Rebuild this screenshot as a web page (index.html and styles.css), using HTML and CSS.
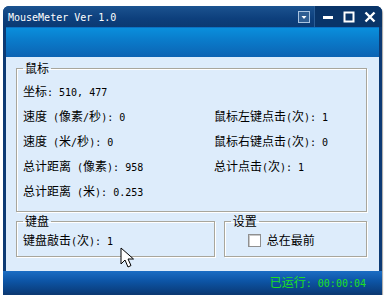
FILE: index.html
```html
<!DOCTYPE html>
<html lang="zh-CN">
<head>
    <meta charset="UTF-8">
    <title>MouseMeter Ver 1.0</title>
    <link rel="stylesheet" href="styles.css">
</head>
<body>
<div class="window">
    <div class="titlebar">
        <span class="title">MouseMeter Ver 1.0</span>
        <span class="menu-btn">
            <svg width="12" height="12" viewBox="0 0 12 12"><rect x="0.5" y="0.5" width="11" height="11" fill="#2f5e93" stroke="#a9c3df"/><path d="M3.5 5h5l-2.5 3z" fill="#ffffff"/></svg>
        </span>
        <span class="controls">
            <svg width="12" height="12" viewBox="0 0 12 12"><rect x="1" y="5" width="10" height="3" fill="#ffffff"/></svg>
            <svg width="12" height="12" viewBox="0 0 12 12"><rect x="1.5" y="1.5" width="9" height="9" fill="none" stroke="#ffffff" stroke-width="2"/></svg>
            <svg width="12" height="12" viewBox="0 0 12 12"><path d="M1.5 1.5l9 9M10.5 1.5l-9 9" stroke="#ffffff" stroke-width="2.4"/></svg>
        </span>
    </div>
    <div class="band"></div>
    <div class="content">
        <fieldset class="group">
            <legend>鼠标</legend>
            <div class="stats">
                <span>坐标<span class="a">: 510, 477</span></span>
                <span></span>
                <span>速度<span class="a"> (</span>像素<span class="a">/</span>秒<span class="a">): 0</span></span>
                <span>鼠标左键点击<span class="a">(</span>次<span class="a">): 1</span></span>
                <span>速度<span class="a"> (</span>米<span class="a">/</span>秒<span class="a">): 0</span></span>
                <span>鼠标右键点击<span class="a">(</span>次<span class="a">): 0</span></span>
                <span>总计距离<span class="a"> (</span>像素<span class="a">): 958</span></span>
                <span>总计点击<span class="a">(</span>次<span class="a">): 1</span></span>
                <span>总计距离<span class="a"> (</span>米<span class="a">): 0.253</span></span>
                <span></span>
            </div>
        </fieldset>
        <div class="bottom-row">
            <fieldset class="group keyboard">
                <legend>键盘</legend>
                <div class="line">键盘敲击<span class="a">(</span>次<span class="a">): 1</span></div>
            </fieldset>
            <fieldset class="group settings">
                <legend>设置</legend>
                <label class="line check"><span class="box"></span>总在最前</label>
            </fieldset>
        </div>
    </div>
    <div class="statusbar">已运行<span class="a">: 00:00:04</span></div>
    <svg class="cursor" width="14" height="22" viewBox="0 0 14 22"><path d="M1 1v16l4-4 3 7 3-1.5-3-6.5h5.5z" fill="#ffffff" stroke="#000000" stroke-width="1"/></svg>
</div>
</body>
</html>
```

FILE: styles.css
```css
body {
    margin: 0;
    background: #ffffff;
    font-family: "Noto Sans CJK SC", "DejaVu Sans", sans-serif;
    font-size: 12px;
    color: #000000;
}
/* half-width text: 6px per char like the old bitmap font */
.a {
    font-family: "DejaVu Sans Mono", "Liberation Mono", monospace;
    font-size: 10px;
    white-space: pre;
}
.window {
    position: relative;
    margin: 6px 0 0 3px;
    width: 379px;
    height: 289px;
    padding: 0 3px 2px;
    box-sizing: border-box;
    background: #0c3a74;
    border-radius: 6px 6px 0 0;
    box-shadow: 1px 1px 1px rgba(0, 0, 0, 0.35);
    display: flex;
    flex-direction: column;
}
.titlebar {
    height: 21px;
    display: flex;
    align-items: center;
    background: linear-gradient(#1b5390, #0d3f7c 60%, #0b3a73);
    margin: 0 -3px;
    padding: 0 0 0 5px;
    border-radius: 6px 6px 0 0;
}
.title {
    font-family: "DejaVu Sans Mono", "Liberation Mono", monospace;
    font-size: 10px;
    color: #ffffff;
    flex: 1;
    padding-top: 1px;
}
.menu-btn {
    display: flex;
    padding-right: 4px;
    height: 21px;
    align-items: center;
    border-right: 1px solid #2a5d96;
}
.controls {
    display: flex;
    gap: 9px;
    height: 21px;
    align-items: center;
    padding: 0 6px 0 7px;
    background: #093468;
    border-radius: 0 6px 0 0;
}
.band {
    height: 30px;
    background: linear-gradient(#0a8fdc, #0a7ccb 40%, #0c63b3);
    border-top: 1px solid #0b72c4;
    box-sizing: border-box;
}
.content {
    height: 214px;
    background: #ddecfb;
    padding: 4px 12px 0 10px;
    box-sizing: border-box;
}
.group {
    margin: 0;
    border: 1px solid #a8a69c;
    box-shadow: inset 1px 1px 0 #ffffff, 1px 1px 0 #ffffff;
    padding: 3px 6px 8px 6px;
}
.group legend {
    padding: 0 2px;
    margin-left: 0;
    line-height: 14px;
}
.stats {
    display: grid;
    grid-template-columns: 191px 1fr;
    grid-auto-rows: 25px;
    align-items: center;
}
.bottom-row {
    display: flex;
    gap: 9px;
    margin-top: 2px;
}
.keyboard {
    width: 200px;
    box-sizing: border-box;
    padding: 5px 6px 7px;
}
.settings {
    width: 144px;
    box-sizing: border-box;
    padding: 5px 6px 7px;
}
.line {
    line-height: 14px;
}
.check {
    display: flex;
    align-items: center;
    gap: 6px;
    margin-left: 17px;
}
.box {
    width: 11px;
    height: 11px;
    background: #ffffff;
    border: 1px solid #8f8f8f;
    box-shadow: inset 1px 1px 0 #c8c8c8;
}
.statusbar {
    height: 22px;
    background: linear-gradient(#1b6dc4, #0d55a6 45%, #0a3c7a);
    color: #1ee01e;
    text-align: right;
    line-height: 22px;
    padding-right: 16px;
    margin: 0 -3px;
}
.cursor {
    position: absolute;
    left: 117px;
    top: 241px;
}
```
